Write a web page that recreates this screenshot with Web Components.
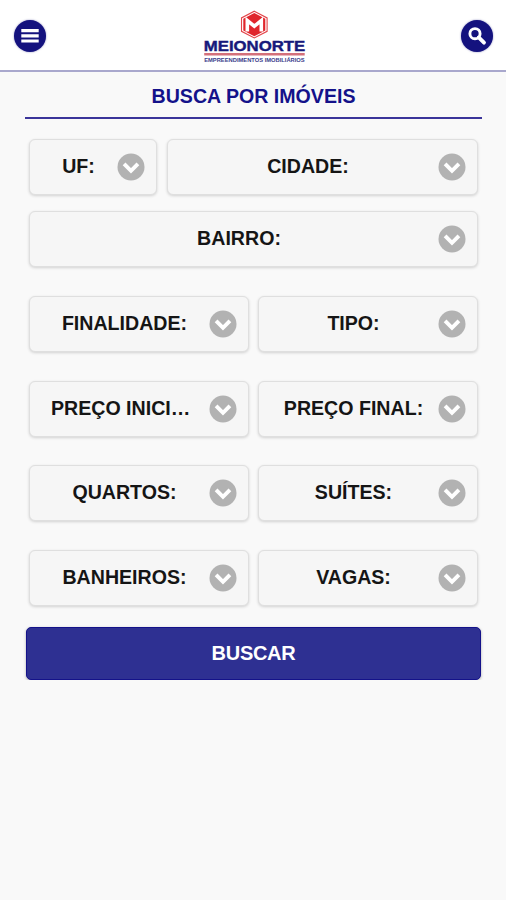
<!DOCTYPE html>
<html lang="pt-BR">
<head>
<meta charset="utf-8">
<title>Meionorte - Busca por imóveis</title>
<style>
  body {
    background: #f9f9f9;
    font-family: "Liberation Sans", Arial, sans-serif;
    margin: 0;
  }
</style>
</head>
<body>
<search-page></search-page>

<script>
// Round navy button, the icon itself is slotted in
class RoundButton extends HTMLElement {
  constructor() {
    super();
    this.attachShadow({mode: 'open'});
    this.shadowRoot.innerHTML = `
      <style>
        :host {
          display: block;
          height: 32px;
          width: 32px;
        }

        button {
          background: #14127e;
          border: 0;
          border-radius: 50%;
          box-shadow: 0 0 2px rgba(20, 18, 126, 0.5);
          display: block;
          height: 32px;
          padding: 0;
          width: 32px;
        }
      </style>
      <button><slot></slot></button>
    `;
  }
}
customElements.define('round-button', RoundButton);

// Red hexagon with the company name below
class BrandLogo extends HTMLElement {
  constructor() {
    super();
    this.attachShadow({mode: 'open'});
    this.shadowRoot.innerHTML = `
      <style>
        :host {
          display: block;
        }

        svg {
          display: block;
        }
      </style>
      <svg width="106" height="56" viewBox="0.6 0 106 56">
        <path d="M53.9 1.2 66.7 7.9v13.4L53.9 28 41.1 21.3V7.9z" fill="#fff" stroke="#e3454a" stroke-width="1.1"/>
        <path d="M53.9 3 64.9 8.8v11.6l-11 5.8-11-5.8V8.8z" fill="#e0262c"/>
        <path d="M46.9 21.6V10.6l7 5.6 7-5.6v11" fill="none" stroke="#fff" stroke-width="3.6"/>
        <text x="3.4" y="40.7" textLength="101.5" lengthAdjust="spacingAndGlyphs"
          font-family="Liberation Sans, sans-serif" font-weight="bold" font-size="14.4"
          fill="#17197b" stroke="#17197b" stroke-width="0.4">MEIONORTE</text>
        <path d="M3.8 44.2h100.5" stroke="#d4707a" stroke-width="2.6"/>
        <text x="3.8" y="52.2" textLength="100.5" lengthAdjust="spacingAndGlyphs"
          font-family="Liberation Sans, sans-serif" font-weight="bold" font-size="5"
          fill="#3b3d8c">EMPREENDIMENTOS IMOBILIÁRIOS</text>
      </svg>
    `;
  }
}
customElements.define('brand-logo', BrandLogo);

class PageHeader extends HTMLElement {
  constructor() {
    super();
    this.attachShadow({mode: 'open'});
    this.shadowRoot.innerHTML = `
      <style>
        :host {
          background: #fff;
          border-bottom: 2px solid #a9a8cd;
          box-sizing: border-box;
          display: flex;
          height: 72px;
          justify-content: space-between;
          padding: 10px 13px 0 14px;
        }

        round-button {
          margin-top: 10px;
        }

        svg {
          display: block;
        }
      </style>
      <round-button>
        <svg width="32" height="32" viewBox="0 0 32 32">
          <path d="M7.3 10.6h17.4M7.3 15.8h17.4M7.3 21h17.4" stroke="#fff" stroke-width="3.2"/>
        </svg>
      </round-button>
      <brand-logo></brand-logo>
      <round-button>
        <svg width="32" height="32" viewBox="0 0 32 32" fill="none" stroke="#fff">
          <circle cx="14" cy="13.7" r="5.1" stroke-width="2.9"/>
          <path d="M17.7 17.4 23 22.7" stroke-width="3.8" stroke-linecap="round"/>
        </svg>
      </round-button>
    `;
  }
}
customElements.define('page-header', PageHeader);

// Select-like box, label comes from the slot
class SelectField extends HTMLElement {
  constructor() {
    super();
    this.attachShadow({mode: 'open'});
    this.shadowRoot.innerHTML = `
      <style>
        :host {
          align-items: center;
          background: #f6f6f6;
          border: 1.5px solid #dfdfdf;
          border-radius: 6px;
          box-shadow: 0 1px 3px rgba(0, 0, 0, 0.16);
          box-sizing: border-box;
          color: #151515;
          display: flex;
          height: 56px;
          min-width: 0;
          padding: 0 11px 0 21px;
        }

        span {
          flex: 1;
          font-size: 19.6px;
          font-weight: bold;
          line-height: 26px;
          margin-bottom: 2px;
          min-width: 0;
          overflow: hidden;
          text-align: center;
          text-overflow: ellipsis;
          white-space: nowrap;
        }

        svg {
          flex: none;
          margin-left: 11px;
        }
      </style>
      <span><slot></slot></span>
      <svg width="28" height="28" viewBox="0 0 28 28">
        <circle cx="14" cy="14" r="13.5" fill="#b2b2b2"/>
        <path d="M7.1 10.8 14 17.8l6.9-7" fill="none" stroke="#fff" stroke-width="3.9"/>
      </svg>
    `;
  }
}
customElements.define('select-field', SelectField);

class SearchPage extends HTMLElement {
  constructor() {
    super();
    this.attachShadow({mode: 'open'});
    this.shadowRoot.innerHTML = `
      <style>
        :host {
          display: block;
        }

        main {
          padding: 0 24px 0 25px;
        }

        h1 {
          border-bottom: 2px solid #3b359a;
          color: #14128a;
          font-size: 19.6px;
          line-height: 24px;
          margin: 0;
          padding: 12px 0 9px;
          text-align: center;
        }

        form {
          display: flex;
          flex-direction: column;
          gap: 28.6px;
          padding: 20.4px 4px 0;
        }

        .place {
          display: grid;
          gap: 16px 10px;
          grid-template-columns: 128px 1fr;
        }

        .wide {
          grid-column: 1 / 3;
        }

        .pair {
          display: grid;
          gap: 9px;
          grid-template-columns: 1fr 1fr;
        }

        button {
          background: #2e3092;
          border: 1.5px solid #14128a;
          border-radius: 5px;
          box-shadow: 0 1px 3px rgba(0, 0, 0, 0.3);
          color: #fff;
          display: block;
          font: bold 20px "Liberation Sans", Arial, sans-serif;
          height: 53px;
          letter-spacing: -0.3px;
          margin: 21.6px 1px 0;
          padding: 0 0 1px;
          width: 455px;
        }
      </style>
      <page-header></page-header>
      <main>
        <h1>BUSCA POR IMÓVEIS</h1>
        <form>
          <div class="place">
            <select-field>UF:</select-field>
            <select-field>CIDADE:</select-field>
            <select-field class="wide">BAIRRO:</select-field>
          </div>
          <div class="pair">
            <select-field>FINALIDADE:</select-field>
            <select-field>TIPO:</select-field>
          </div>
          <div class="pair">
            <select-field>PREÇO INICIAL:</select-field>
            <select-field>PREÇO FINAL:</select-field>
          </div>
          <div class="pair">
            <select-field>QUARTOS:</select-field>
            <select-field>SUÍTES:</select-field>
          </div>
          <div class="pair">
            <select-field>BANHEIROS:</select-field>
            <select-field>VAGAS:</select-field>
          </div>
        </form>
        <button>BUSCAR</button>
      </main>
    `;
  }
}
customElements.define('search-page', SearchPage);
</script>
</body>
</html>
